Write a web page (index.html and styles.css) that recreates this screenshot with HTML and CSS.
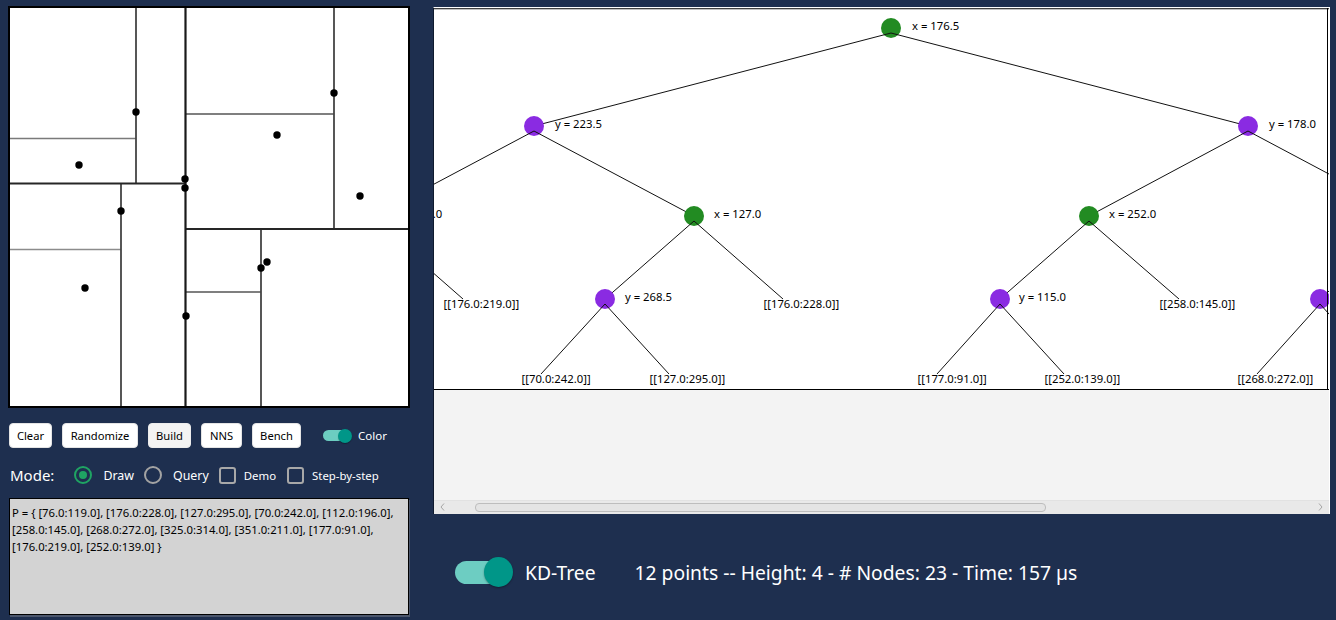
FILE: index.html
```html
<!DOCTYPE html>
<html lang="en">
<head>
<meta charset="utf-8">
<title>KD-Tree</title>
<link rel="stylesheet" href="styles.css">
</head>
<body>
<div class="app">
  <div class="left">
    <div class="plane">
      <svg width="398" height="398" viewBox="0 0 398 398">
        <g class="cuts">
          <line class="d3a" x1="0" y1="130.5" x2="126" y2="130.5"/>
          <line class="d3b" x1="0" y1="241.5" x2="111" y2="241.5"/>
          <line class="d3" x1="175.5" y1="284" x2="251" y2="284"/>
          <line class="d3" x1="175.5" y1="106" x2="324" y2="106"/>
          <line class="d2" x1="126" y1="0" x2="126" y2="175.5"/>
          <line class="d2" x1="111" y1="175.5" x2="111" y2="398"/>
          <line class="d2" x1="251" y1="221" x2="251" y2="398"/>
          <line class="d2" x1="324" y1="0" x2="324" y2="221"/>
          <line class="d1" x1="0" y1="175.5" x2="175.5" y2="175.5"/>
          <line class="d1" x1="175.5" y1="221" x2="398" y2="221"/>
          <line class="d0" x1="175.5" y1="0" x2="175.5" y2="398"/>
        </g>
        <g class="pts">
          <circle cx="75" cy="280" r="3.7"/>
          <circle cx="175" cy="171" r="3.7"/>
          <circle cx="126" cy="104" r="3.7"/>
          <circle cx="69" cy="157" r="3.7"/>
          <circle cx="111" cy="203" r="3.7"/>
          <circle cx="257" cy="254" r="3.7"/>
          <circle cx="267" cy="127" r="3.7"/>
          <circle cx="324" cy="85" r="3.7"/>
          <circle cx="350" cy="188" r="3.7"/>
          <circle cx="176" cy="308" r="3.7"/>
          <circle cx="175" cy="180" r="3.7"/>
          <circle cx="251" cy="260" r="3.7"/>
        </g>
      </svg>
    </div>

    <div class="toolbar">
      <button class="btn btn-clear">Clear</button>
      <button class="btn btn-random">Randomize</button>
      <button class="btn btn-build btn-hover">Build</button>
      <button class="btn btn-nns">NNS</button>
      <button class="btn btn-bench">Bench</button>
      <span class="switch-sm"><span class="track"></span><span class="thumb"></span></span>
      <span class="switch-sm-label">Color</span>
    </div>

    <div class="mode">
      <span class="mode-label">Mode:</span>
      <span class="radio on"><span class="dot"></span></span>
      <span class="opt-label">Draw</span>
      <span class="radio"></span>
      <span class="opt-label">Query</span>
      <span class="check"></span>
      <span class="chk-label">Demo</span>
      <span class="check"></span>
      <span class="chk-label">Step-by-step</span>
    </div>

    <div class="points">P = { [76.0:119.0], [176.0:228.0], [127.0:295.0], [70.0:242.0], [112.0:196.0],<br>[258.0:145.0], [268.0:272.0], [325.0:314.0], [351.0:211.0], [177.0:91.0],<br>[176.0:219.0], [252.0:139.0] }</div>
  </div>

  <div class="right">
    <div class="tree-view">
      <svg class="tree" width="895" height="382" viewBox="0 0 895 382">
        <rect x="0" y="0" width="895" height="382" fill="#fff"/>
        <circle class="nx" cx="457" cy="20" r="10"/>
        <g class="edges">
          <line x1="457" y1="25" x2="100" y2="118"/>
          <line x1="457" y1="25" x2="814" y2="118"/>
        </g>
        <circle class="ny" cx="100" cy="118" r="10"/>
        <circle class="ny" cx="814" cy="118" r="10"/>
        <g class="edges">
          <line x1="100" y1="123" x2="-60" y2="208"/>
          <line x1="100" y1="123" x2="260" y2="208"/>
          <line x1="814" y1="123" x2="655" y2="208"/>
          <line x1="814" y1="123" x2="974" y2="208"/>
        </g>
        <circle class="nx" cx="-60" cy="208" r="10"/>
        <circle class="nx" cx="260" cy="208" r="10"/>
        <circle class="nx" cx="655" cy="208" r="10"/>
        <circle class="nx" cx="974" cy="208" r="10"/>
        <g class="edges">
          <line x1="-60" y1="213" x2="-149" y2="291"/>
          <line x1="-60" y1="213" x2="29" y2="291"/>
          <line x1="260" y1="213" x2="171" y2="291"/>
          <line x1="260" y1="213" x2="349" y2="291"/>
          <line x1="655" y1="213" x2="566" y2="291"/>
          <line x1="655" y1="213" x2="745" y2="291"/>
          <line x1="974" y1="213" x2="886" y2="291"/>
          <line x1="974" y1="213" x2="1063" y2="291"/>
        </g>
        <circle class="ny" cx="-149" cy="291" r="10"/>
        <circle class="ny" cx="171" cy="291" r="10"/>
        <circle class="ny" cx="566" cy="291" r="10"/>
        <circle class="ny" cx="886" cy="291" r="10"/>
        <g class="edges">
          <line x1="-149" y1="296" x2="-213" y2="366"/>
          <line x1="-149" y1="296" x2="-85" y2="366"/>
          <line x1="171" y1="296" x2="107" y2="366"/>
          <line x1="171" y1="296" x2="235" y2="366"/>
          <line x1="566" y1="296" x2="503" y2="366"/>
          <line x1="566" y1="296" x2="630" y2="366"/>
          <line x1="886" y1="296" x2="823" y2="366"/>
          <line x1="886" y1="296" x2="949" y2="366"/>
        </g>
        <g class="lbl">
          <text x="478" y="21.5">x = 176.5</text>
          <text x="121" y="119.5">y = 223.5</text>
          <text x="835" y="119.5">y = 178.0</text>
          <text x="-39" y="209.5">x = 112.0</text>
          <text x="280" y="209.5">x = 127.0</text>
          <text x="675" y="209.5">x = 252.0</text>
          <text x="994" y="209.5">x = 325.0</text>
          <text x="-129" y="292.5">y = 157.5</text>
          <text x="191" y="292.5">y = 268.5</text>
          <text x="585" y="292.5">y = 115.0</text>
          <text x="906" y="292.5">y = 293.0</text>
          <text x="9.5" y="300">[[176.0:219.0]]</text>
          <text x="329.5" y="300">[[176.0:228.0]]</text>
          <text x="725.5" y="300">[[258.0:145.0]]</text>
          <text x="1043.5" y="300">[[351.0:211.0]]</text>
          <text x="87.5" y="375">[[70.0:242.0]]</text>
          <text x="215.5" y="375">[[127.0:295.0]]</text>
          <text x="483.5" y="375">[[177.0:91.0]]</text>
          <text x="610.5" y="375">[[252.0:139.0]]</text>
          <text x="803.5" y="375">[[268.0:272.0]]</text>
          <text x="929.5" y="375">[[325.0:314.0]]</text>
        </g>
        <g class="frame">
          <line x1="0" y1="0.75" x2="895" y2="0.75" stroke-width="1.5"/>
          <line x1="0" y1="381.5" x2="895" y2="381.5"/>
          <line x1="893.5" y1="0" x2="893.5" y2="382"/>
        </g>
      </svg>
      <div class="empty"></div>
      <div class="hscroll">
        <svg class="arrow" width="5" height="8" viewBox="0 0 5 8"><path d="M4 0.5 L1 4 L4 7.5"/></svg>
        <span class="hthumb"></span>
        <svg class="arrow arrow-r" width="5" height="8" viewBox="0 0 5 8"><path d="M1 0.5 L4 4 L1 7.5"/></svg>
      </div>
    </div>

    <div class="status">
      <span class="switch-lg"><span class="track"></span><span class="thumb"></span></span>
      <span class="kd-label">KD-Tree</span>
      <span class="stats">12 points -- Height: 4 - # Nodes: 23 - Time: 157 µs</span>
    </div>
  </div>
</div>
</body>
</html>
```

FILE: styles.css
```css
html, body {
  margin: 0;
  padding: 0;
}

body {
  width: 1336px;
  height: 620px;
  overflow: hidden;
  background: #1e2f4f;
  font-family: "Noto Sans", "Open Sans", sans-serif;
  color: #fff;
}

.app {
  display: flex;
  align-items: flex-start;
  padding: 6px 0 0 8px;
}

/* ---------- left column ---------- */
.left {
  width: 402px;
  display: flex;
  flex-direction: column;
}

.plane {
  width: 398px;
  height: 398px;
  border: 2px solid #000;
  background: #fff;
}

.plane svg {
  display: block;
}

.cuts line { fill: none; }
.cuts .d0 { stroke: #1a1a1a; stroke-width: 2.2; }
.cuts .d1 { stroke: #262626; stroke-width: 2; }
.cuts .d2 { stroke: #444; stroke-width: 1.8; }
.cuts .d3 { stroke: #555; stroke-width: 1.6; }
.cuts .d3a { stroke: #7a7a7a; stroke-width: 1.4; }
.cuts .d3b { stroke: #8c8c8c; stroke-width: 1.4; }

.pts circle { fill: #000; }

.toolbar {
  display: flex;
  align-items: center;
  height: 25px;
  margin-top: 15px;
  padding-left: 1px;
}

.btn {
  height: 25px;
  box-sizing: border-box;
  padding: 0;
  margin: 0 10px 0 0;
  display: flex;
  align-items: center;
  justify-content: center;
  background: #fff;
  border: 1px solid #e4e4e4;
  border-radius: 4px;
  font-family: "Noto Sans", "Open Sans", sans-serif;
  font-size: 11.2px;
  color: #000;
}

.btn-clear { width: 43px; }
.btn-random { width: 76px; }
.btn-build { width: 43px; }
.btn-nns { width: 41px; }
.btn-bench { width: 49px; }

.btn-hover {
  background: #f3f3f3;
  border-color: #ececec;
}

.switch-sm {
  position: relative;
  width: 29px;
  height: 14px;
  margin-left: 12px;
}

.switch-sm .track {
  position: absolute;
  left: 0;
  top: 1.5px;
  width: 24px;
  height: 11px;
  border-radius: 6px;
  background: #6ccdc1;
}

.switch-sm .thumb {
  position: absolute;
  right: 0;
  top: 0;
  width: 14px;
  height: 14px;
  border-radius: 50%;
  background: #009688;
  box-shadow: 0 1px 1px rgba(0, 0, 0, 0.3);
}

.switch-sm-label {
  margin-left: 6px;
  font-size: 11.5px;
}

.mode {
  display: flex;
  align-items: center;
  height: 18px;
  margin-top: 18px;
  padding-left: 2px;
}

.mode-label {
  font-size: 15px;
  margin-right: 20px;
}

.radio {
  width: 18px;
  height: 18px;
  box-sizing: border-box;
  border: 2px solid #a3a3a3;
  border-radius: 50%;
  display: flex;
  align-items: center;
  justify-content: center;
}

.radio.on {
  border-color: #1fa463;
}

.radio .dot {
  width: 8px;
  height: 8px;
  border-radius: 50%;
  background: #1fa463;
}

.opt-label {
  font-size: 12.4px;
  margin: 0 10px 0 11px;
}

.check {
  width: 17px;
  height: 17px;
  box-sizing: border-box;
  border: 2px solid #a8a8a8;
  border-radius: 3px;
}

.chk-label {
  font-size: 11.4px;
  margin: 0 11px 0 8px;
}

.points {
  width: 400px;
  height: 117px;
  box-sizing: border-box;
  margin: 14px 0 0 1px;
  padding: 5px 2px;
  border: 1px solid #000;
  background: #d3d3d3;
  color: #000;
  font-size: 11.3px;
  line-height: 17px;
  white-space: nowrap;
  box-shadow: 1px 2px 0 #4b566c;
}

/* ---------- right column ---------- */
.right {
  width: 897px;
  margin-left: 23px;
  margin-top: 1px;
}

.tree-view {
  width: 897px;
  box-sizing: border-box;
  border-top: 1px solid #ffffff;
  border-left: 1px solid #0f1a2e;
  border-right: 1px solid #ffffff;
  background: #f3f3f3;
}

.tree {
  display: block;
  overflow: hidden;
}

.edges line {
  stroke: #111;
  stroke-width: 1;
}

.nx { fill: #228b22; }
.ny { fill: #8a2be2; }

.lbl text {
  font-family: "Noto Sans", "Open Sans", sans-serif;
  font-size: 11.3px;
  fill: #000;
}

.frame line {
  stroke: #000;
  stroke-width: 1;
}

.empty {
  height: 110px;
}

.hscroll {
  height: 14px;
  box-sizing: border-box;
  display: flex;
  align-items: center;
  padding: 0 6px 1px 6px;
  background: #e9e9e9;
  border-top: 1px solid #e2e2e2;
}

.arrow path {
  fill: none;
  stroke: #a5a5a5;
  stroke-width: 1;
}

.hthumb {
  width: 571px;
  height: 9px;
  box-sizing: border-box;
  margin-left: 30px;
  border: 1px solid #bdbdbd;
  border-radius: 4px;
  background: #e4e4e4;
}

.arrow-r {
  margin-left: auto;
}

.status {
  display: flex;
  align-items: center;
  height: 30px;
  margin-top: 43px;
  padding-left: 22px;
}

.switch-lg {
  position: relative;
  width: 58px;
  height: 30px;
}

.switch-lg .track {
  position: absolute;
  left: 0;
  top: 3.5px;
  width: 50px;
  height: 23px;
  border-radius: 12px;
  background: #6dcdc2;
}

.switch-lg .thumb {
  position: absolute;
  right: 0;
  top: 0;
  width: 29px;
  height: 30px;
  border-radius: 50%;
  background: #009688;
  box-shadow: 0 1px 2px rgba(0, 0, 0, 0.35);
}

.kd-label {
  font-size: 19.3px;
  margin-left: 12px;
}

.stats {
  font-size: 19.3px;
  margin-left: 39px;
}
```
